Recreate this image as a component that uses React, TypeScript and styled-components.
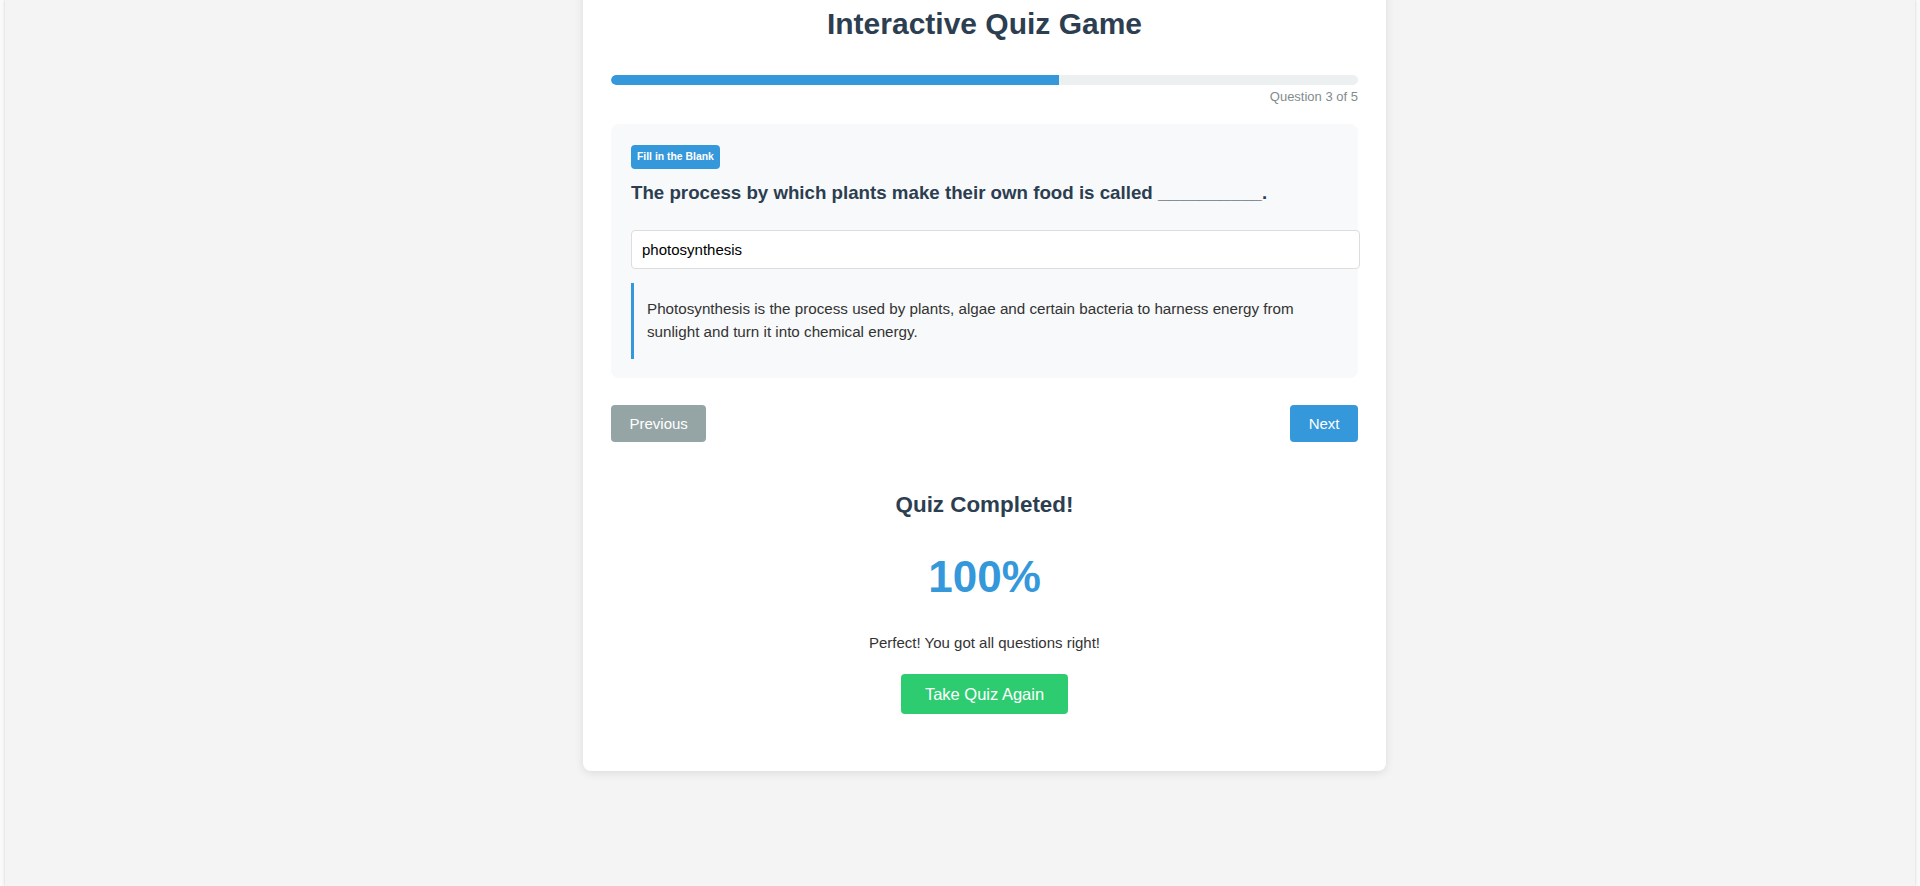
import React from "react";
import styled, { createGlobalStyle } from "styled-components";

const GlobalStyle = createGlobalStyle`
  html, body { margin: 0; padding: 0; }
  body {
    background: #fafafa;
    font-family: "Liberation Sans", Arial, sans-serif;
    color: #333;
    overflow: hidden;
  }
  * { box-sizing: border-box; }
`;

const Page = styled.div`
  margin: 0 5px;
  min-height: 100vh;
  background: #f4f4f4;
  box-shadow: 0 0 3px rgba(0, 0, 0, 0.18);
  padding-left: 49px;
  display: flex;
  flex-direction: column;
  align-items: center;
`;

const Card = styled.div`
  width: 803px;
  margin-top: -23.5px;
  background: #fff;
  border-radius: 8px;
  box-shadow: 0 2px 10px rgba(0, 0, 0, 0.1);
  padding: 30px 28px 57px;
`;

const Title = styled.h1`
  margin: 0 0 33.5px;
  text-align: center;
  font-size: 30px;
  line-height: 34.5px;
  font-weight: 700;
  color: #2c3e50;
`;

const Track = styled.div`
  height: 10px;
  border-radius: 5px;
  background: #ecf0f1;
  overflow: hidden;
`;

const Fill = styled.div`
  height: 100%;
  background: #3498db;
  border-radius: 5px 0 0 5px;
`;

const ProgressText = styled.div`
  margin-top: 4px;
  text-align: right;
  font-size: 13px;
  line-height: 15px;
  color: #7f8c8d;
`;

const QuestionBox = styled.div`
  margin-top: 20px;
  background: #f8f9fa;
  border-radius: 8px;
  padding: 21px 20px 19px;
`;

const Badge = styled.span`
  display: inline-block;
  background: #3498db;
  color: #fff;
  font-size: 10.4px;
  font-weight: 700;
  line-height: 14px;
  padding: 5px 6px;
  border-radius: 4px;
`;

const QuestionText = styled.h3`
  margin: 13px 0 27px;
  font-size: 18.72px;
  line-height: 21.5px;
  font-weight: 700;
  color: #2c3e50;
`;

const AnswerInput = styled.input`
  display: block;
  box-sizing: content-box;
  width: 100%;
  height: 19px;
  padding: 9px 10px;
  border: 1px solid #ddd;
  border-radius: 4px;
  font-family: "Liberation Sans", Arial, sans-serif;
  font-size: 15px;
  color: #000;
  background: #fff;
  outline: none;
`;

const Explanation = styled.div`
  margin-top: 14px;
  border-left: 3px solid #3498db;
  padding: 15px 12px 15px 13px;
  font-size: 15.2px;
  line-height: 22.8px;
  color: #333;
`;

const NavRow = styled.div`
  margin-top: 27px;
  display: flex;
  justify-content: space-between;
  align-items: center;
`;

const NavButton = styled.button<{ $variant: "prev" | "next" }>`
  border: none;
  border-radius: 4px;
  padding: 10px 18.5px;
  font-family: "Liberation Sans", Arial, sans-serif;
  font-size: 15px;
  line-height: 17px;
  color: #fff;
  cursor: pointer;
  background: ${(p) => (p.$variant === "prev" ? "#95a5a6" : "#3498db")};
`;

const Result = styled.div`
  margin-top: 50px;
  display: flex;
  flex-direction: column;
  align-items: center;
  text-align: center;
`;

const ResultTitle = styled.h2`
  margin: 0;
  font-size: 22.4px;
  line-height: 26px;
  font-weight: 700;
  color: #2c3e50;
`;

const Score = styled.div`
  margin-top: 33px;
  font-size: 44px;
  line-height: 51px;
  font-weight: 700;
  color: #3498db;
`;

const Message = styled.p`
  margin: 32px 0 0;
  font-size: 15px;
  line-height: 17px;
  color: #333;
`;

const RetryButton = styled.button`
  margin-top: 23px;
  border: none;
  border-radius: 4px;
  padding: 11px 24px;
  font-family: "Liberation Sans", Arial, sans-serif;
  font-size: 16.5px;
  line-height: 18px;
  color: #fff;
  background: #2ecc71;
  cursor: pointer;
`;

export default function App() {
  const current = 3;
  const total = 5;
  return (
    <>
      <GlobalStyle />
      <Page>
        <Card>
          <Title>Interactive Quiz Game</Title>
          <Track>
            <Fill style={{ width: `${(current / total) * 100}%` }} />
          </Track>
          <ProgressText>
            Question {current} of {total}
          </ProgressText>
          <QuestionBox>
            <Badge>Fill in the Blank</Badge>
            <QuestionText>
              The process by which plants make their own food is called __________.
            </QuestionText>
            <AnswerInput defaultValue="photosynthesis" />
            <Explanation>
              Photosynthesis is the process used by plants, algae and certain bacteria to
              harness energy from sunlight and turn it into chemical energy.
            </Explanation>
          </QuestionBox>
          <NavRow>
            <NavButton $variant="prev">Previous</NavButton>
            <NavButton $variant="next">Next</NavButton>
          </NavRow>
          <Result>
            <ResultTitle>Quiz Completed!</ResultTitle>
            <Score>100%</Score>
            <Message>Perfect! You got all questions right!</Message>
            <RetryButton>Take Quiz Again</RetryButton>
          </Result>
        </Card>
      </Page>
    </>
  );
}
